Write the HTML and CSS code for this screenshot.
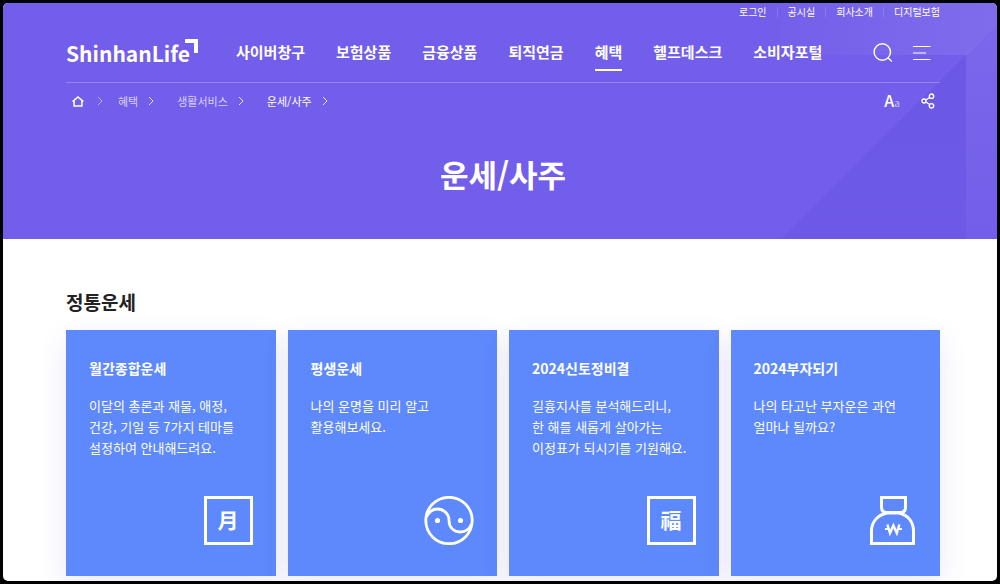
FILE: index.html
```html
<!DOCTYPE html>
<html lang="ko">
<head>
<meta charset="utf-8">
<meta name="viewport" content="width=device-width, initial-scale=1">
<title>운세/사주 - ShinhanLife</title>
<link rel="stylesheet" href="styles.css">
</head>
<body>
<div class="page">
  <header class="hero">
    <svg class="hero-art" viewBox="0 0 217 236" preserveAspectRatio="xMaxYMin slice" aria-hidden="true">
      <defs>
        <linearGradient id="glow" x1="0" y1="0" x2="1" y2="0"><stop offset="0" stop-color="#fff" stop-opacity="0.01"/><stop offset="1" stop-color="#fff" stop-opacity="0.09"/></linearGradient>
        <linearGradient id="edge" x1="0" y1="0" x2="0" y2="1"><stop offset="0" stop-color="#fff" stop-opacity="0.06"/><stop offset="1" stop-color="#fff" stop-opacity="0"/></linearGradient>
        <linearGradient id="shade" x1="0" y1="0" x2="0" y2="1"><stop offset="0" stop-color="#5a49d8" stop-opacity="0.3"/><stop offset="1" stop-color="#5a49d8" stop-opacity="0.22"/></linearGradient>
      </defs>
      <path d="M0 0H217V22L187 52H0Z" fill="url(#glow)"/>
      <path d="M186 52V236H1Z" fill="url(#shade)"/>
      <path d="M186 52L217 22V236H186Z" fill="url(#edge)"/>
    </svg>
    <div class="container">
      <ul class="utility">
        <li><a href="#">로그인</a></li>
        <li><a href="#">공시실</a></li>
        <li><a href="#">회사소개</a></li>
        <li><a href="#">디지털보험</a></li>
      </ul>
      <div class="masthead">
        <a class="logo" href="#">ShinhanLife<svg class="logo-mark" width="13" height="14" viewBox="0 0 13 14" aria-hidden="true"><path d="M0 0H13V14H9V4H0Z" fill="#fff"/></svg></a>
        <nav class="nav" aria-label="주요 메뉴">
          <a href="#">사이버창구</a>
          <a href="#">보험상품</a>
          <a href="#">금융상품</a>
          <a href="#">퇴직연금</a>
          <a class="current" href="#">혜택</a>
          <a href="#">헬프데스크</a>
          <a href="#">소비자포털</a>
        </nav>
        <div class="actions">
          <button type="button" aria-label="검색"><svg width="20" height="20" viewBox="0 0 20 20" fill="none" stroke="#fff" stroke-width="1.4"><circle cx="9.3" cy="9" r="8.2"/><path d="M15 14.8L18.8 18.4"/></svg></button>
          <button type="button" aria-label="전체메뉴"><svg width="18" height="16" viewBox="0 0 18 16" fill="none" stroke="#fff" stroke-width="1.2"><path d="M0 1.5H17.5M0 8H13M0 14.5H17.5"/></svg></button>
        </div>
      </div>
      <div class="subbar">
        <nav class="crumbs" aria-label="현재 위치">
          <a class="home" href="#" aria-label="홈"><svg width="12" height="11" viewBox="0 0 12 11" fill="none" stroke="#fff" stroke-width="1.5"><path d="M0.6 5.6L6 1L11.4 5.6M2.1 4.8V10H9.9V4.8"/></svg></a>
          <svg class="chev dim" width="6" height="10" viewBox="0 0 6 10"><path d="M1 1L5 5L1 9"/></svg>
          <a href="#">혜택</a>
          <svg class="chev" width="6" height="10" viewBox="0 0 6 10"><path d="M1 1L5 5L1 9"/></svg>
          <a class="deep" href="#">생활서비스</a>
          <svg class="chev" width="6" height="10" viewBox="0 0 6 10"><path d="M1 1L5 5L1 9"/></svg>
          <a class="deep here" href="#" aria-current="page">운세/사주</a>
          <svg class="chev" width="6" height="10" viewBox="0 0 6 10"><path d="M1 1L5 5L1 9"/></svg>
        </nav>
        <div class="tools">
          <button class="font-size" type="button" aria-label="글자 크기">A<span>a</span></button>
          <button type="button" aria-label="공유"><svg width="14" height="16" viewBox="0 0 14 16" fill="none" stroke="#fff" stroke-width="1.4"><circle cx="3" cy="8" r="2"/><circle cx="10.5" cy="3.2" r="2.2"/><circle cx="10.5" cy="12.8" r="2.2"/><path d="M4.8 7L8.6 4.5M4.8 9L8.6 11.5"/></svg></button>
        </div>
      </div>
      <h1 class="title">운세/사주</h1>
    </div>
  </header>
  <main class="container content">
    <h2 class="section-title">정통운세</h2>
    <div class="cards">
      <a class="card" href="#">
        <h3>월간종합운세</h3>
        <p>이달의 총론과 재물, 애정,<br>건강, 기일 등 7가지 테마를<br>설정하여 안내해드려요.</p>
        <span class="stamp">月</span>
      </a>
      <a class="card" href="#">
        <h3>평생운세</h3>
        <p>나의 운명을 미리 알고<br>활용해보세요.</p>
        <svg class="icon" width="50" height="49" viewBox="0 0 50 49" fill="none" stroke="#fff" stroke-width="2.8"><circle cx="25" cy="24.5" r="23.2"/><path d="M2.5 21C5 15.5 9 13 13.5 13C20 13 25 18 25 24.5C25 31.5 30 36 36 36C41.5 36 45.5 33 47.5 28"/><g fill="#fff" stroke="none"><circle cx="13.5" cy="24.5" r="2.6"/><circle cx="36.5" cy="24.5" r="2.6"/></g></svg>
      </a>
      <a class="card" href="#">
        <h3>2024신토정비결</h3>
        <p>길흉지사를 분석해드리니,<br>한 해를 새롭게 살아가는<br>이정표가 되시기를 기원해요.</p>
        <span class="stamp">福</span>
      </a>
      <a class="card" href="#">
        <h3>2024부자되기</h3>
        <p>나의 타고난 부자운은 과연<br>얼마나 될까요?</p>
        <svg class="icon" width="49" height="49" viewBox="0 0 49 49" fill="none" stroke="#fff" stroke-width="3"><path d="M13.5 1.5H37.5V11C37.5 14.5 35.5 16.5 32.5 16.5H18.5C15.5 16.5 13.5 14.5 13.5 11Z"/><path d="M19 17H31C40 19 45.5 26 45.5 35V47.5H3.5V35C3.5 26 9.5 19 19 17Z"/><path stroke-width="2.4" d="M19.4 28.5L22 37L25.4 29.5L28.8 37L31.4 28.5"/><path stroke-width="1.8" d="M17 33H21M30 33H34"/></svg>
      </a>
    </div>
  </main>
</div>
</body>
</html>
```
FILE: styles.css
```css
* {
  box-sizing: border-box;
}

body {
  margin: 0;
  background: #000;
  font-family: "Noto Sans CJK KR", sans-serif;
  color: #fff;
}

.page {
  min-height: 100vh;
  border: 3px solid #000;
  border-radius: 8px;
  background: #fff;
  overflow: hidden;
}

a {
  color: inherit;
  text-decoration: none;
}

button {
  display: flex;
  padding: 0;
  border: 0;
  background: none;
  color: inherit;
  font: inherit;
  cursor: pointer;
}

h1,
h2,
h3,
p,
ul {
  margin: 0;
  padding: 0;
}

svg {
  flex: none;
}

.container {
  position: relative;
  padding: 0 57px 0 63px;
}

.hero {
  position: relative;
  min-height: 236px;
  background: #725eea;
}

.hero-art {
  position: absolute;
  top: 0;
  right: 0;
  width: 217px;
  height: 100%;
}

.utility {
  display: flex;
  justify-content: flex-end;
  align-items: flex-start;
  height: 20px;
  list-style: none;
  font-size: 10px;
  line-height: 18px;
}

.utility li {
  display: flex;
  align-items: center;
}

.utility li + li::before {
  content: "";
  width: 1px;
  height: 10px;
  margin: 0 10px;
  background: rgba(255, 255, 255, 0.15);
}

.masthead {
  display: flex;
  align-items: center;
  height: 60px;
  border-bottom: 1px solid rgba(255, 255, 255, 0.25);
}

.logo {
  display: flex;
  position: relative;
  width: 132px;
  font-size: 21px;
  font-weight: 700;
  line-height: 28px;
}

.logo-mark {
  position: absolute;
  top: 0;
  right: 0;
}

.nav {
  display: flex;
  gap: 31px;
  margin-left: 38px;
  font-size: 15px;
  font-weight: 700;
  line-height: 22px;
}

.nav a {
  padding: 6px 0;
  border-bottom: 2px solid transparent;
  white-space: nowrap;
}

.nav .current {
  border-color: #fff;
}

.actions {
  display: flex;
  align-items: center;
  gap: 20px;
  margin-left: auto;
  padding-right: 9px;
}

.subbar {
  display: flex;
  align-items: center;
  justify-content: space-between;
  height: 36px;
}

.crumbs {
  display: flex;
  align-items: center;
  padding-left: 6px;
  font-size: 11px;
  line-height: 16px;
  color: #d8d2fa;
}

.crumbs .deep {
  margin-left: 6px;
}

.crumbs .here {
  color: #fff;
}

.crumbs .home {
  display: flex;
}

.chev {
  margin: 0 17px 0 10px;
  fill: none;
  stroke: #e6e2fc;
}

.chev.dim {
  margin: 0 15px 0 13px;
  stroke: #b9aff5;
}

.tools {
  display: flex;
  align-items: center;
  gap: 21px;
  padding-right: 5px;
}

.font-size {
  align-items: baseline;
  font-size: 16px;
  font-weight: 500;
  line-height: 18px;
}

.font-size span {
  font-size: 10px;
  color: #bdb3f6;
}

.title {
  padding-top: 32px;
  font-size: 31px;
  font-weight: 700;
  line-height: 46px;
  text-align: center;
}

.content {
  padding-top: 49px;
  padding-bottom: 5px;
}

.section-title {
  margin-bottom: 14px;
  color: #222;
  font-size: 19px;
  font-weight: 700;
  line-height: 28px;
}

.cards {
  display: grid;
  grid-template-columns: repeat(4, 1fr);
  gap: 12px;
}

.card {
  display: flex;
  flex-direction: column;
  min-height: 246px;
  padding: 28px 23px 31px;
  background: #5d89fc;
  box-shadow: 0 10px 28px rgba(72, 50, 160, 0.11);
}

.card h3 {
  margin-bottom: 17px;
  font-size: 14px;
  font-weight: 700;
  line-height: 20px;
}

.card p {
  font-size: 13px;
  line-height: 21px;
}

.stamp,
.icon {
  margin-top: auto;
  align-self: flex-end;
}

.stamp {
  display: flex;
  justify-content: center;
  width: 49px;
  height: 49px;
  border: 3px solid #fff;
  font-size: 21px;
  font-weight: 700;
  line-height: 40px;
}
```
